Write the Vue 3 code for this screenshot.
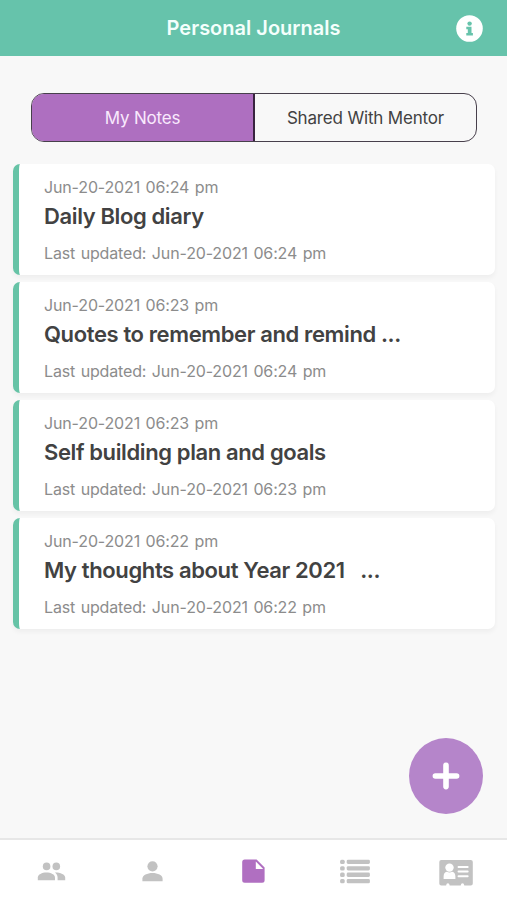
<script setup>
import { ref } from 'vue'

const tabs = ['My Notes', 'Shared With Mentor']
const activeTab = ref(0)

const notes = [
  { created: 'Jun-20-2021 06:24 pm', title: 'Daily Blog diary', updated: 'Jun-20-2021 06:24 pm' },
  { created: 'Jun-20-2021 06:23 pm', title: 'Quotes to remember and remind ...', updated: 'Jun-20-2021 06:24 pm' },
  { created: 'Jun-20-2021 06:23 pm', title: 'Self building plan and goals', updated: 'Jun-20-2021 06:23 pm' },
  { created: 'Jun-20-2021 06:22 pm', title: 'My thoughts about Year 2021\u00a0\u00a0 ...', updated: 'Jun-20-2021 06:22 pm' },
]
</script>

<template>
  <div class="screen">
    <header class="header">
      <h1 class="heading">Personal Journals</h1>
      <button class="info" aria-label="Information">
        <svg viewBox="0 0 27 27" width="27" height="27">
          <circle cx="13.5" cy="13.5" r="13.3" fill="#fff" />
          <circle cx="13.6" cy="8.6" r="2.2" fill="#66c3ab" />
          <path d="M10.3 11.8h5.2v6.3h1.4v2.5h-6.6v-2.5h1.5v-3.8h-1.5z" fill="#66c3ab" />
        </svg>
      </button>
    </header>

    <main class="content">
      <div class="tabs">
        <button
          v-for="(tab, i) in tabs"
          :key="tab"
          class="tab"
          :class="{ active: i === activeTab }"
          @click="activeTab = i"
        ><span>{{ tab }}</span></button>
      </div>

      <div class="notes">
        <article v-for="note in notes" :key="note.title" class="note">
          <p class="meta">{{ note.created }}</p>
          <h2 class="title">{{ note.title }}</h2>
          <p class="meta updated">Last updated: {{ note.updated }}</p>
        </article>
      </div>

      <button class="add" aria-label="Add note">
        <svg viewBox="0 0 28 28" width="28" height="28">
          <path d="M14 3.4v21.2M3.4 14h21.2" stroke="#fff" stroke-width="5.6" stroke-linecap="round" />
        </svg>
      </button>
    </main>

    <nav class="nav">
      <a class="item">
        <svg viewBox="0 0 30 30" width="30" height="30" fill="#c2c2c2">
          <circle cx="10.6" cy="10.4" r="3.8" />
          <circle cx="20.3" cy="10.4" r="3.8" />
          <path d="M1.8 24.3v-2.7c0-3.1 4.2-5.1 8.6-5.1s8.6 2 8.6 5.1v2.7z" />
          <path d="M18.9 16.5c5.3-.1 10.3 1.9 10.3 5.1v2.7h-7.6v-2.7c0-2.2-1-3.9-2.7-5.1z" />
        </svg>
      </a>
      <a class="item">
        <svg viewBox="0 0 30 30" width="30" height="30" fill="#c2c2c2">
          <circle cx="15.5" cy="10.3" r="5.1" />
          <path d="M5.4 25.2v-2.5c0-3.4 4.9-5.6 10.1-5.6s10.1 2.2 10.1 5.6v2.5z" />
        </svg>
      </a>
      <a class="item">
        <svg viewBox="0 0 30 30" width="30" height="30" fill="#b06fc1">
          <path fill-rule="evenodd" d="M6.2 3.5h12.4l8 7.9v12.9q0 2.5-2.5 2.5H6.7Q4.2 26.8 4.2 24.3V6q0-2.5 2.5-2.5zM17.8 5.4v7.6h7.4z" />
        </svg>
      </a>
      <a class="item">
        <svg viewBox="0 0 30 30" width="30" height="30" fill="#c2c2c2">
          <g v-for="n in 4" :key="n" :transform="`translate(0 ${(n - 1) * 6.45})`">
            <rect x="0.1" y="3.7" width="4.6" height="4.3" rx="1.5" />
            <rect x="6.7" y="3.7" width="23.2" height="4.3" rx="1.4" />
          </g>
        </svg>
      </a>
      <a class="item">
        <svg viewBox="0 0 34 30" width="34" height="30">
          <path fill="#c2c2c2" d="M2.3 3.9h29.5q2 0 2 2v21.5q0 2-2 2h-6.5q-.3-2.2-1.8-2.2t-1.8 2.2h-11q-.3-2.2-1.8-2.2t-1.8 2.2H2.3q-2 0-2-2V5.9q0-2 2-2z" />
          <g fill="#fff">
            <circle cx="10.5" cy="11.6" r="4.2" />
            <path d="M4.6 22.9v-2.3q0-4.2 3.2-4.8 2.7 1.4 5.4 0 3.2.6 3.2 4.8v2.3z" />
            <rect x="18.6" y="10" width="11" height="2" rx=".8" />
            <rect x="18.6" y="14.5" width="11" height="2" rx=".8" />
            <rect x="18.6" y="19.2" width="11" height="2" rx=".8" />
          </g>
        </svg>
      </a>
    </nav>
  </div>
</template>

<style>
body {
  margin: 0;
}
</style>

<style scoped>
.screen {
  display: flex;
  flex-direction: column;
  width: 507px;
  height: 900px;
  overflow: hidden;
  background: #f8f8f8;
  color: #424242;
  font-family: Inter, "Liberation Sans", sans-serif;
}

button {
  padding: 0;
  border: 0;
  background: none;
  color: inherit;
  font: inherit;
}

svg {
  display: block;
}

.header {
  display: grid;
  grid-template-columns: 1fr auto 1fr;
  align-items: center;
  flex: none;
  height: 56px;
  box-sizing: border-box;
  padding: 0 24px;
  background: #66c3ab;
}

.heading {
  grid-column: 2;
  margin: 0;
  color: #f4fffc;
  font-size: 20px;
  font-weight: 600;
  line-height: 28px;
}

.info {
  justify-self: end;
}

.content {
  position: relative;
  flex: 1;
  padding: 37px 12px 0 13px;
}

.tabs {
  display: flex;
  height: 49px;
  box-sizing: border-box;
  margin: 0 18px 0 18px;
  border: 1.5px solid #48404c;
  border-radius: 13px;
  overflow: hidden;
}

.tab {
  flex: 1;
  font-size: 17px;
  letter-spacing: -0.17px;
  text-align: center;
}

.tab.active {
  border-right: 2px solid #39243f;
  background: #ae6fc0;
  color: #f9e9fd;
}

.notes {
  display: flex;
  flex-direction: column;
  gap: 7px;
  margin-top: 22px;
}

.note {
  height: 111px;
  box-sizing: border-box;
  padding: 13px 16px 0 25px;
  border-left: 6px solid #66c3a6;
  border-radius: 7px;
  background: #fff;
  box-shadow: 0 3px 5px rgba(0, 0, 0, 0.045);
}

.meta {
  margin: 0;
  color: #8c8c8c;
  font-size: 16px;
  letter-spacing: -0.15px;
  line-height: 20px;
  white-space: nowrap;
  word-spacing: 1.2px;
}

.title {
  margin: 5px 0 0;
  font-size: 22px;
  font-weight: 600;
  letter-spacing: -0.38px;
  line-height: 28px;
  white-space: nowrap;
}

.updated {
  margin-top: 13px;
}

.add {
  position: absolute;
  right: 24px;
  bottom: 24.5px;
  display: grid;
  place-items: center;
  width: 74px;
  height: 76px;
  border-radius: 50%;
  background: #b585ca;
}

.nav {
  display: grid;
  grid-template-columns: repeat(5, 1fr);
  flex: none;
  height: 62px;
  box-sizing: border-box;
  padding-top: 16px;
  border-top: 2px solid #e7e7e7;
  background: #fff;
}

.item {
  display: flex;
  justify-content: center;
}
</style>
